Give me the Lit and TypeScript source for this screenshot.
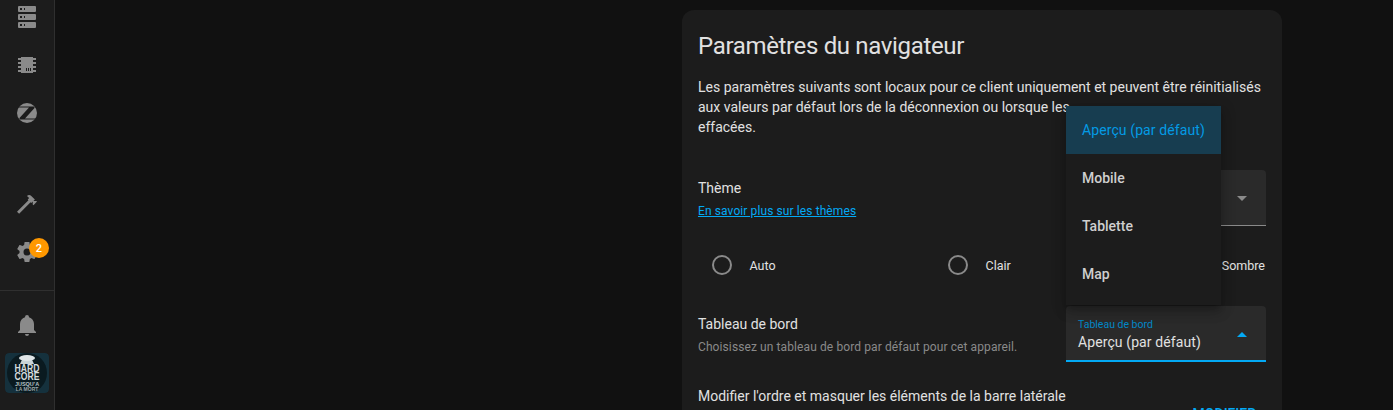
import { LitElement, html, css } from "lit";
import { customElement } from "lit/decorators.js";

const P = {
  server: "M4,1H20A1,1 0 0,1 21,2V6A1,1 0 0,1 20,7H4A1,1 0 0,1 3,6V2A1,1 0 0,1 4,1M4,9H20A1,1 0 0,1 21,10V14A1,1 0 0,1 20,15H4A1,1 0 0,1 3,14V10A1,1 0 0,1 4,9M4,17H20A1,1 0 0,1 21,18V22A1,1 0 0,1 20,23H4A1,1 0 0,1 3,22V18A1,1 0 0,1 4,17M9,5H10V3H9V5M9,13H10V11H9V13M9,21H10V19H9V21M5,3V5H7V3H5M5,11V13H7V11H5M5,19V21H7V19H5Z",
  chip: "M6,4H18V5H21V7H18V9H21V11H18V13H21V15H18V17H21V19H18V20H6V19H3V17H6V15H3V13H6V11H3V9H6V7H3V5H6V4M11,15V18H12V15H11M13,15V18H14V15H13M15,15V18H16V15H15Z",
  hammer: "M2 19.63L13.43 8.2L12.72 7.5L14.14 6.07L12 3.89C13.2 2.7 15.09 2.7 16.27 3.89L19.87 7.5L18.45 8.91H21.29L22 9.62L18.45 13.21L17.74 12.5V9.62L16.27 11.04L15.56 10.33L4.13 21.76L2 19.63Z",
  cog: "M12,15.5A3.5,3.5 0 0,1 8.5,12A3.5,3.5 0 0,1 12,8.5A3.5,3.5 0 0,1 15.5,12A3.5,3.5 0 0,1 12,15.5M19.43,12.97C19.47,12.65 19.5,12.33 19.5,12C19.5,11.67 19.47,11.34 19.43,11L21.54,9.37C21.73,9.22 21.78,8.95 21.66,8.73L19.66,5.27C19.54,5.05 19.27,4.96 19.05,5.05L16.56,6.05C16.04,5.66 15.5,5.32 14.87,5.07L14.5,2.42C14.46,2.18 14.25,2 14,2H10C9.75,2 9.54,2.18 9.5,2.42L9.13,5.07C8.5,5.32 7.96,5.66 7.44,6.05L4.95,5.05C4.73,4.96 4.46,5.05 4.34,5.27L2.34,8.73C2.21,8.95 2.27,9.22 2.46,9.37L4.57,11C4.53,11.34 4.5,11.67 4.5,12C4.5,12.33 4.53,12.65 4.57,12.97L2.46,14.63C2.27,14.78 2.21,15.05 2.34,15.27L4.34,18.73C4.46,18.95 4.73,19.03 4.95,18.95L7.44,17.94C7.96,18.34 8.5,18.68 9.13,18.93L9.5,21.58C9.54,21.82 9.75,22 10,22H14C14.25,22 14.46,21.82 14.5,21.58L14.87,18.93C15.5,18.67 16.04,18.34 16.56,17.94L19.05,18.95C19.27,19.03 19.54,18.95 19.66,18.73L21.66,15.27C21.78,15.05 21.73,14.78 21.54,14.63L19.43,12.97Z",
  bell: "M21,19V20H3V19L5,17V11C5,7.9 7.03,5.17 10,4.29C10,4.19 10,4.1 10,4A2,2 0 0,1 12,2A2,2 0 0,1 14,4C14,4.1 14,4.19 14,4.29C16.97,5.17 19,7.9 19,11V17L21,19M14,21A2,2 0 0,1 12,23A2,2 0 0,1 10,21",
};

const icon = (d: string) => html`<svg class="ic" viewBox="0 0 24 24"><path fill="currentColor" d=${d}></path></svg>`;

@customElement("app-root")
export class AppRoot extends LitElement {
  static styles = css`
    :host { display: block; width: 1393px; height: 410px; overflow: hidden; background: #111111; font-family: Roboto, "Liberation Sans", sans-serif; color: #e1e1e1; }
    .page { display: flex; height: 410px; overflow: hidden; position: relative; }
    .side { width: 54px; flex: none; background: #1c1c1c; border-right: 1px solid #2f2f2f; display: flex; flex-direction: column; align-items: center; color: #8a8a8a; height: 410px; }
    .ic { width: 24px; height: 24px; display: block; }
    .item { height: 48px; display: flex; align-items: center; justify-content: center; width: 54px; flex: none; position: relative; }
    .top { margin-top: -7px; }
    .spacer { height: 43px; flex: none; }
    .badge { position: absolute; left: 29px; top: 10px; width: 20px; height: 20px; border-radius: 50%; background: #ff9800; color: #fff; font-size: 11px; font-weight: 500; display: flex; align-items: center; justify-content: center; }
    .rule { width: 54px; height: 1px; background: #2f2f2f; flex: none; margin-top: 14px; }
    .bell { height: 34px; margin-top: 17px; }
    .avatar { width: 44px; height: 40px; flex: none; margin-top: 11px; border-radius: 4px; display: block; }
    .main { flex: 1; display: flex; padding: 10px 0 0 627px; min-width: 0; }
    .card { width: 600px; height: 420px; flex: none; background: #1c1c1c; border-radius: 12px; padding: 0 16px; box-sizing: border-box; position: relative; }
    h1 { margin: 0; font-size: 24px; font-weight: 400; line-height: 32px; padding-top: 20px; color: #e1e1e1; letter-spacing: -0.34px; }
    .intro { margin: 0; padding-top: 15px; font-size: 14px; line-height: 20px; width: 568px; color: #e1e1e1; }
    .row { display: flex; justify-content: space-between; }
    .theme { margin-top: 33px; height: 56px; }
    .theme-text { padding-top: 8px; }
    .label { font-size: 14px; line-height: 20px; color: #e1e1e1; }
    .link { font-size: 12px; line-height: 16px; color: #03a9f4; text-decoration: underline; display: block; margin-top: 5px; letter-spacing: 0.1px; }
    .sel { width: 200px; height: 56px; flex: none; background: #2a2a2a; border-radius: 4px 4px 0 0; border-bottom: 1px solid #8a8a8a; box-sizing: border-box; position: relative; }
    .arrow { position: absolute; right: 19px; top: 26px; width: 0; height: 0; border-left: 5px solid transparent; border-right: 5px solid transparent; border-top: 5px solid #8a8a8a; }
    .radios { display: flex; margin-top: 11px; height: 56px; align-items: center; }
    .radio { width: 236px; flex: none; display: flex; align-items: center; padding-left: 14px; box-sizing: border-box; font-size: 12.5px; color: #e1e1e1; }
    .circ { width: 20px; height: 20px; box-sizing: border-box; border: 2px solid #8a8a8a; border-radius: 50%; margin-right: 17.5px; flex: none; }
    .sombre { flex: 1; text-align: right; font-size: 12.5px; margin-left: -240px; padding-right: 1px; }
    .dash { margin-top: 13px; height: 56px; }
    .dash .t { padding-top: 8px; }
    .hint { font-size: 12px; line-height: 16px; color: #8a8a8a; margin-top: 5px; letter-spacing: 0.1px; }
    .sel.on { border-bottom: 2px solid #03a9f4; }
    .sel.on .small { position: absolute; left: 12px; top: 13px; font-size: 10.5px; line-height: 12px; color: #0288c7; }
    .sel.on .val { position: absolute; left: 12px; top: 27px; font-size: 14px; letter-spacing: 0.1px; line-height: 18px; color: #e1e1e1; }
    .sel.on .up { position: absolute; right: 19px; top: 26px; width: 0; height: 0; border-left: 5px solid transparent; border-right: 5px solid transparent; border-bottom: 5px solid #03a9f4; }
    .order { margin-top: 24px; }
    .modify { font-size: 14px; font-weight: 500; color: #03a9f4; padding-right: 10px; line-height: 20px; margin-top: 18px; }
    .menu { position: absolute; left: 384px; top: 96px; width: 155px; height: 199px; background: #1c1c1c; box-shadow: 0 5px 5px -3px rgba(0,0,0,.2), 0 8px 10px 1px rgba(0,0,0,.14), 0 3px 14px 2px rgba(0,0,0,.12); z-index: 2; }
    .opt { height: 48px; display: flex; align-items: center; padding-left: 16px; font-size: 14px; color: #cfcfcf; font-weight: 500; }
    .opt.sel1 { background: #173d50; color: #039be5; font-weight: 400; letter-spacing: 0.1px; }
  `;

  render() {
    return html`<div class="page">
      <nav class="side">
        <div class="item top">${icon(P.server)}</div>
        <div class="item">${icon(P.chip)}</div>
        <div class="item">
          <svg class="ic" viewBox="0 0 24 24">
            <circle cx="12" cy="12" r="10" fill="currentColor"></circle>
            <path fill="#1c1c1c" d="M3.8 5.6H19.5V7L10 17.6H20.5V18.4H4.5V17L14 6.4H3.8Z"></path>
          </svg>
        </div>
        <div class="spacer"></div>
        <div class="item">${icon(P.hammer)}</div>
        <div class="item">${icon(P.cog)}<span class="badge">2</span></div>
        <div class="rule"></div>
        <div class="item bell">${icon(P.bell)}</div>
        <svg class="avatar" viewBox="0 0 44 40">
          <rect width="44" height="40" rx="4" fill="#15313d"></rect>
          <circle cx="22" cy="20" r="20" fill="#0a1a20"></circle>
          <path d="M15 11L18 4.5H26L29 11Z" fill="#c9d3d6"></path>
          <ellipse cx="22" cy="5" rx="8" ry="3" fill="#dfe5e7"></ellipse>
          <text x="22" y="19" text-anchor="middle" textLength="25" lengthAdjust="spacingAndGlyphs" font-family="Liberation Sans" font-size="10" font-weight="700" fill="#d5dcde">HARD</text>
          <text x="22" y="27" text-anchor="middle" textLength="25" lengthAdjust="spacingAndGlyphs" font-family="Liberation Sans" font-size="10" font-weight="700" fill="#d5dcde">CORE</text>
          <text x="22" y="33" text-anchor="middle" font-family="Liberation Sans" font-size="5.5" font-weight="700" fill="#b5c0c4">JUSQU'A</text>
          <text x="22" y="38" text-anchor="middle" font-family="Liberation Sans" font-size="5" font-weight="700" fill="#9aa6aa">LA MORT</text>
        </svg>
      </nav>
      <main class="main">
        <section class="card">
          <h1>Paramètres du navigateur</h1>
          <p class="intro">Les paramètres suivants sont locaux pour ce client uniquement et peuvent être réinitialisés<br />aux valeurs par défaut lors de la déconnexion ou lorsque les<br />effacées.</p>
          <div class="row theme">
            <div class="theme-text"><div class="label">Thème</div><a class="link">En savoir plus sur les thèmes</a></div>
            <div class="sel"><span class="arrow"></span></div>
          </div>
          <div class="radios">
            <div class="radio"><span class="circ"></span>Auto</div>
            <div class="radio"><span class="circ"></span>Clair</div>
            <div class="sombre">Sombre</div>
          </div>
          <div class="row dash">
            <div class="t"><div class="label">Tableau de bord</div><div class="hint">Choisissez un tableau de bord par défaut pour cet appareil.</div></div>
            <div class="sel on"><span class="small">Tableau de bord</span><span class="val">Aperçu (par défaut)</span><span class="up"></span></div>
          </div>
          <div class="row order">
            <div class="label">Modifier l'ordre et masquer les éléments de la barre latérale</div>
            <div class="modify">MODIFIER</div>
          </div>
          <div class="menu">
            <div class="opt sel1">Aperçu (par défaut)</div>
            <div class="opt">Mobile</div>
            <div class="opt">Tablette</div>
            <div class="opt">Map</div>
          </div>
        </section>
      </main>
    </div>`;
  }
}
